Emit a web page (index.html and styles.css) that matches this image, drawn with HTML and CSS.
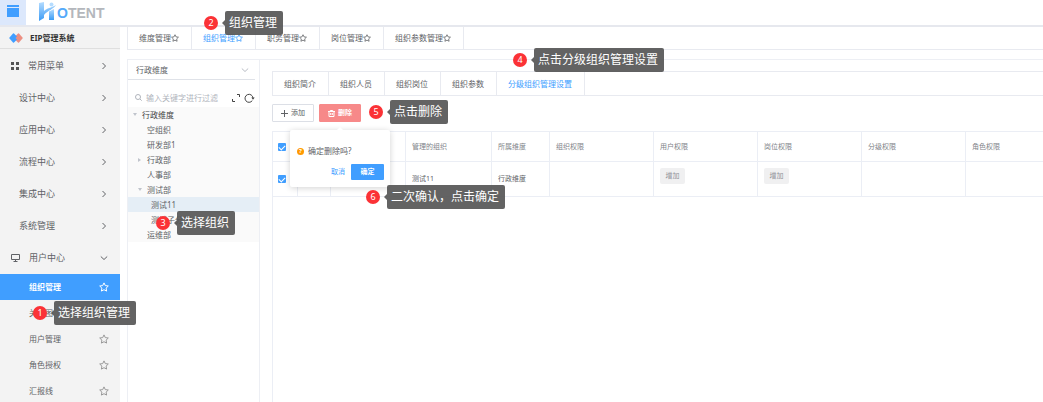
FILE: index.html
```html
<!DOCTYPE html>
<html lang="zh-CN">
<head>
    <meta charset="UTF-8">
    <meta name="viewport" content="width=device-width, initial-scale=1.0">
    <title>EIP管理系统</title>
    <link rel="stylesheet" href="styles.css">
</head>
<body>
    <!-- Shared icons -->
    <svg class="sprite" aria-hidden="true">
        <symbol id="right" viewBox="0 0 8 8"><path d="M2.500 1 5.500 4 2.500 7"/></symbol>
        <symbol id="down" viewBox="0 0 8 8"><path d="M.8 2.500 4 5.500 7.200 2.500"/></symbol>
        <symbol id="star" viewBox="0 0 10 10"><path d="M5 .9 6.3 3.6 9.3 4 7.1 6.1 7.6 9.1 5 7.7 2.4 9.1 2.9 6.1 .7 4 3.7 3.6z"/></symbol>
    </svg>

    <header class="topbar">
        <button class="menu-btn" aria-label="菜单">
            <svg width="12" height="12" viewBox="0 0 12 12"><path d="M0 0h12v2H0zM0 3h12v9H0z" fill="#409eff"/></svg>
        </button>
        <a class="logo" href="#">
            <svg width="19" height="19" viewBox="0 0 19 19">
                <defs>
                    <linearGradient id="blue" x1="0" y1="0" x2="0" y2="1">
                        <stop offset="0" stop-color="#b5dcff"/>
                        <stop offset="1" stop-color="#3a9bf5"/>
                    </linearGradient>
                </defs>
                <path d="M1 1 6 0v9C9 6 13 6 18 3c-2 4-8 5-12 10v3L1 19z" fill="url(#blue)"/>
                <path d="M11 9.500 16 7v11h-5z" fill="url(#blue)"/>
                <circle cx="13.500" cy="2.500" r="2" fill="#b5dcff"/>
            </svg>
            <span><b>O</b>TENT</span>
        </a>
    </header>

    <div class="layout">
        <!-- Sidebar -->
        <aside class="sidebar">
            <div class="system">
                <svg width="14" height="10" viewBox="0 0 14 10">
                    <path d="M9 .5Q9.500 0 10 .5L13.500 4.500Q14 5 13.500 5.500L10 9.500Q9.500 10 9 9.500L5.500 6V4z" fill="#ec8f82"/>
                    <path d="M4 .5Q4.500 0 5 .5L8 3.500 6.500 5 8 6.500 5 9.500Q4.500 10 4 9.500L.5 5.500Q0 5 .5 4.500z" fill="#409eff"/>
                </svg>
                EIP管理系统
            </div>
            <nav class="menu">
                <a class="has-icon" href="#">
                    <svg width="8" height="8" viewBox="0 0 8 8"><path d="M0 0h3v3H0zM5 0h3v3H5zM0 5h3v3H0zM5 5h3v3H5z" fill="#555"/></svg>
                    <span>常用菜单</span><svg class="line arrow"><use href="#right"/></svg>
                </a>
                <a href="#"><span>设计中心</span><svg class="line arrow"><use href="#right"/></svg></a>
                <a href="#"><span>应用中心</span><svg class="line arrow"><use href="#right"/></svg></a>
                <a href="#"><span>流程中心</span><svg class="line arrow"><use href="#right"/></svg></a>
                <a href="#"><span>集成中心</span><svg class="line arrow"><use href="#right"/></svg></a>
                <a href="#"><span>系统管理</span><svg class="line arrow"><use href="#right"/></svg></a>
                <a class="has-icon" href="#">
                    <svg class="line" width="9" height="8" viewBox="0 0 9 8"><path d="M.5 .5h8v5h-8zM2.500 7.500h4M4.500 5.500v2"/></svg>
                    <span>用户中心</span><svg class="line arrow"><use href="#down"/></svg>
                </a>
            </nav>
            <nav class="submenu">
                <a class="active" href="#">组织管理<svg class="line star"><use href="#star"/></svg></a>
                <a href="#">关系图<svg class="line star"><use href="#star"/></svg></a>
                <a href="#">用户管理<svg class="line star"><use href="#star"/></svg></a>
                <a href="#">角色授权<svg class="line star"><use href="#star"/></svg></a>
                <a href="#">汇报线<svg class="line star"><use href="#star"/></svg></a>
            </nav>
        </aside>

        <main class="main">
            <nav class="tabs">
                <a href="#">维度管理<svg class="line"><use href="#star"/></svg></a>
                <a class="active" href="#">组织管理<svg class="line"><use href="#star"/></svg></a>
                <a href="#">职务管理<svg class="line"><use href="#star"/></svg></a>
                <a href="#">岗位管理<svg class="line"><use href="#star"/></svg></a>
                <a href="#">组织参数管理<svg class="line"><use href="#star"/></svg></a>
            </nav>

            <div class="panels">
                <!-- Organisation tree -->
                <section class="tree-panel">
                    <div class="dimension">
                        <select aria-label="维度"><option>行政维度</option></select>
                        <svg class="line"><use href="#down"/></svg>
                    </div>
                    <div class="search">
                        <svg class="line" width="7" height="7" viewBox="0 0 7 7"><circle cx="3" cy="3" r="2.500"/><path d="m5 5 1.700 1.700"/></svg>
                        <input type="text" placeholder="输入关键字进行过滤" aria-label="过滤">
                        <button aria-label="展开"><svg class="line" width="8" height="8" viewBox="0 0 8 8"><path d="M5 .5h2.500V3M.5 5v2.500H3"/></svg></button>
                        <button aria-label="刷新"><svg class="line" width="11" height="10" viewBox="0 0 11 10"><path d="M8.300 7.600A4 4 0 1 1 9 5"/><path d="M7.300 4.500h3.400L9 6.700z" fill="currentColor" stroke="none"/></svg></button>
                    </div>
                    <ul class="tree">
                        <li class="root open">行政维度</li>
                        <li>空组织</li>
                        <li>研发部1</li>
                        <li class="closed">行政部</li>
                        <li>人事部</li>
                        <li class="open">测试部</li>
                        <li class="child selected">测试11</li>
                        <li class="child">测试子分部</li>
                        <li>运维部</li>
                    </ul>
                </section>

                <!-- Organisation detail -->
                <section class="detail">
                    <nav class="detail-tabs">
                        <a href="#">组织简介</a>
                        <a href="#">组织人员</a>
                        <a href="#">组织岗位</a>
                        <a href="#">组织参数</a>
                        <a class="active" href="#">分级组织管理设置</a>
                    </nav>
                    <div class="toolbar">
                        <button class="btn"><svg class="line" width="7" height="7" viewBox="0 0 7 7"><path d="M3.500 0v7M0 3.500h7"/></svg>添加</button>
                        <div class="delete">
                            <button class="btn danger"><svg class="line" width="7" height="7" viewBox="0 0 7 7"><path d="M0 1.500h7M2.300 1.500v-1h2.400v1M1 1.500v5h5v-5M2.700 3v2M4.300 3v2"/></svg>删除</button>
                            <div class="popover">
                                <p><i>?</i>确定删除吗?</p>
                                <div class="popover-actions">
                                    <button class="cancel">取消</button>
                                    <button class="confirm">确定</button>
                                </div>
                            </div>
                        </div>
                    </div>
                    <div class="table-wrap">
                        <table>
                            <colgroup>
                                <col class="c-check"><col class="c-index"><col class="c-action"><col class="c-org"><col class="c-dim">
                                <col class="c-auth" span="5">
                            </colgroup>
                            <thead>
                                <tr>
                                    <th><input type="checkbox" aria-label="全选" checked></th>
                                    <th></th>
                                    <th></th>
                                    <th>管理的组织</th>
                                    <th>所属维度</th>
                                    <th>组织权限</th>
                                    <th>用户权限</th>
                                    <th>岗位权限</th>
                                    <th>分级权限</th>
                                    <th>角色权限</th>
                                </tr>
                            </thead>
                            <tbody>
                                <tr>
                                    <td><input type="checkbox" aria-label="选择" checked></td>
                                    <td></td>
                                    <td></td>
                                    <td>测试11</td>
                                    <td>行政维度</td>
                                    <td></td>
                                    <td class="top"><button class="tag">增加</button></td>
                                    <td class="top"><button class="tag">增加</button></td>
                                    <td></td>
                                    <td></td>
                                </tr>
                            </tbody>
                        </table>
                    </div>
                </section>
            </div>
        </main>
    </div>

    <!-- Guide steps -->
    <div class="step step-1"><b>1</b><span>选择组织管理</span></div>
    <div class="step step-2"><b>2</b><span>组织管理</span></div>
    <div class="step step-3"><b>3</b><span>选择组织</span></div>
    <div class="step step-4"><b>4</b><span>点击分级组织管理设置</span></div>
    <div class="step step-5"><b>5</b><span>点击删除</span></div>
    <div class="step step-6"><b>6</b><span>二次确认，点击确定</span></div>
</body>
</html>
```
FILE: styles.css
```css
* {
    margin: 0;
    padding: 0;
    box-sizing: border-box;
}

body {
    display: flex;
    flex-direction: column;
    height: 100vh;
    overflow: hidden;
    background: #fff;
    color: #606266;
    font-family: "Noto Sans", "Noto Sans CJK SC", sans-serif;
    font-size: 8px;
    line-height: 12px;
}

a {
    color: inherit;
    text-decoration: none;
}

button,
input,
select {
    border: none;
    background: none;
    color: inherit;
    font: inherit;
}

svg {
    flex: none;
}

.sprite {
    position: absolute;
    width: 0;
    height: 0;
}

.line {
    fill: none;
    stroke: currentColor;
}

/* Top bar */
.topbar {
    display: flex;
    flex: none;
    height: 27px;
    border-bottom: 2px solid #e6e8ee;
}

.menu-btn {
    display: flex;
    align-items: center;
    justify-content: center;
    width: 26px;
    padding-bottom: 4px;
    background: #dce8fc;
}

.logo {
    display: flex;
    align-items: center;
    padding-left: 12px;
    color: #b4b7bc;
    font-family: "Liberation Sans", Arial, sans-serif;
    font-size: 14px;
    font-weight: bold;
}

.logo svg {
    margin-bottom: 3px;
}

.logo span {
    padding-top: 1px;
}

.logo b {
    color: #55aafa;
}

.layout {
    display: flex;
    flex: 1;
    min-height: 0;
}

/* Sidebar */
.sidebar {
    flex: none;
    width: 120px;
    overflow: hidden;
    background: #f3f3f3;
}

.system {
    display: flex;
    align-items: center;
    gap: 7px;
    height: 22px;
    padding-left: 9px;
    border-bottom: 1px solid #dfdfdf;
    color: #333;
    font-weight: bold;
}

.menu {
    padding-top: 1px;
}

.menu a {
    display: flex;
    align-items: center;
    height: 32px;
    padding: 0 12px 0 19px;
    font-size: 9px;
}

.menu .has-icon {
    gap: 9px;
    padding-left: 11px;
}

.menu span {
    flex: 1;
}

.arrow {
    width: 8px;
    height: 8px;
}

.submenu a {
    display: flex;
    align-items: center;
    justify-content: space-between;
    height: 26px;
    padding: 0 11px 0 29px;
}

.submenu .active {
    background: #409eff;
    color: #fff;
    font-weight: bold;
}

.star {
    width: 10px;
    height: 10px;
    color: #999;
}

.active .star {
    color: #fff;
}

/* Main area */
.main {
    display: flex;
    flex: 1;
    flex-direction: column;
    min-width: 0;
    padding-left: 7px;
}

.tabs {
    display: flex;
    flex: none;
    height: 23px;
    border-bottom: 1px solid #e8eaf0;
    border-left: 1px solid #e8eaf0;
}

.tabs a {
    display: flex;
    align-items: center;
    padding: 0 12px 0 11px;
    border-right: 1px solid #e8eaf0;
}

.tabs svg {
    width: 8px;
    height: 8px;
}

.tabs .active,
.detail-tabs .active {
    color: #409eff;
}

.panels {
    display: flex;
    flex: 1;
    min-height: 0;
    margin-top: 9px;
}

/* Tree panel */
.tree-panel {
    flex: none;
    width: 133px;
    border: 1px solid #edeff4;
    border-bottom: none;
}

.dimension {
    display: flex;
    align-items: center;
    height: 20px;
    margin-right: 4px;
    padding: 0 6px 0 8px;
    border-bottom: 1px solid #dfe2e8;
}

.dimension select {
    flex: 1;
    appearance: none;
}

.dimension svg {
    width: 8px;
    height: 8px;
    color: #b8bcc4;
}

.search {
    display: flex;
    align-items: center;
    gap: 4px;
    height: 27px;
    padding: 8px 4px 0 7px;
    color: #b0b4bc;
}

.search input {
    flex: 1;
    min-width: 0;
}

.search input::placeholder {
    color: #b0b4bc;
}

.search button {
    display: flex;
    color: #444;
}

.tree {
    list-style: none;
    background: #fafafa;
}

.tree li {
    display: flex;
    align-items: center;
    gap: 5px;
    height: 15px;
    padding-left: 19px;
}

.tree .child {
    padding-left: 23px;
}

.tree .selected {
    background: #e5eef6;
}

.tree .open,
.tree .closed {
    padding-left: 10px;
}

.tree .root {
    padding-left: 5px;
    color: #444;
}

.open::before,
.closed::before {
    content: "";
    border: 2px solid transparent;
    border-top: 3px solid #c0c4cc;
    border-bottom: none;
}

.closed::before {
    margin-right: 1px;
    border: 2px solid transparent;
    border-left: 3px solid #c0c4cc;
    border-right: none;
}

/* Detail panel */
.detail {
    display: flex;
    flex: 1;
    flex-direction: column;
    min-width: 0;
    padding: 11px 0 0 12px;
    border-top: 1px solid #edeff4;
}

.detail-tabs {
    display: flex;
    flex: none;
    height: 25px;
    border: 1px solid #e8eaf0;
    border-right: none;
}

.detail-tabs a {
    display: flex;
    align-items: center;
    padding: 0 12px 0 11px;
    border-right: 1px solid #e8eaf0;
}

.toolbar {
    display: flex;
    flex: none;
    gap: 5px;
    padding: 8px 0 9px;
}

.btn {
    display: flex;
    align-items: center;
    justify-content: center;
    gap: 3px;
    width: 42px;
    height: 18px;
    border: 1px solid #dcdfe6;
    border-radius: 1px;
    font-size: 7px;
}

.danger {
    border-color: #f78989;
    background: #f78989;
    color: #fff;
    font-weight: bold;
}

.delete {
    position: relative;
}

.popover {
    position: absolute;
    top: 26px;
    left: 50%;
    z-index: 1;
    width: 100px;
    margin-left: -50px;
    padding: 15px 6px 7px 7px;
    border-radius: 2px;
    background: #fff;
    box-shadow: 0 1px 6px rgba(0, 0, 0, 0.18);
}

.popover::before {
    content: "";
    position: absolute;
    top: -3px;
    left: 47px;
    border: 3px solid transparent;
    border-top: none;
    border-bottom-color: #fff;
}

.popover p {
    display: flex;
    align-items: center;
    gap: 4px;
}

.popover i {
    width: 7px;
    height: 7px;
    border-radius: 50%;
    background: #ff9900;
    color: #fff;
    font-size: 6px;
    font-style: normal;
    font-weight: bold;
    line-height: 7px;
    text-align: center;
}

.popover-actions {
    display: flex;
    justify-content: flex-end;
    gap: 6px;
    margin-top: 7px;
    font-size: 7px;
}

.cancel {
    color: #409eff;
}

.confirm {
    width: 33px;
    height: 16px;
    border-radius: 1px;
    background: #409eff;
    color: #fff;
    font-weight: bold;
}

/* Table */
.table-wrap {
    flex: 1;
    overflow: hidden;
    border-top: 1px solid #ebeef5;
    border-left: 1px solid #ebeef5;
}

table {
    width: 797px;
    border-collapse: separate;
    border-spacing: 0;
    table-layout: fixed;
    font-size: 7px;
}

.c-check {
    width: 25px;
}

.c-index {
    width: 33px;
}

.c-action {
    width: 75px;
}

.c-org {
    width: 86px;
}

.c-dim {
    width: 58px;
}

.c-auth {
    width: 104px;
}

th,
td {
    height: 35px;
    padding: 0 6px;
    border-right: 1px solid #ebeef5;
    border-bottom: 1px solid #ebeef5;
    text-align: left;
    vertical-align: middle;
}

th {
    height: 30px;
    color: #808389;
    font-weight: normal;
}

th:first-child,
td:first-child {
    padding: 0 5px;
}

td.top {
    padding-top: 6px;
    vertical-align: top;
}

input[type="checkbox"] {
    display: block;
    width: 8px;
    height: 8px;
    appearance: none;
    border-radius: 1px;
    background: #409eff;
}

input[type="checkbox"]::after {
    content: "";
    display: block;
    width: 5px;
    height: 3px;
    margin: 0 auto;
    border-bottom: 1px solid #fff;
    border-left: 1px solid #fff;
    transform: translateY(2px) rotate(-45deg);
}

.tag {
    display: block;
    width: 25px;
    height: 16px;
    border-radius: 2px;
    background: #f0f0f1;
    color: #909399;
}

/* Guide steps */
.step {
    position: absolute;
    z-index: 2;
    display: flex;
    align-items: center;
    gap: 7px;
    color: #fff;
    font-size: 12px;
    line-height: 24px;
}

.step b {
    width: 14px;
    height: 14px;
    border-radius: 50%;
    background: #fb3236;
    font-size: 9px;
    font-weight: normal;
    line-height: 14px;
    text-align: center;
}

.step span {
    position: relative;
    padding: 0 6px 0 4px;
    border-radius: 2px;
    background: rgba(82, 82, 82, 0.9);
}

.step span::before {
    content: "";
    position: absolute;
    top: 9px;
    left: -3px;
    border: 3px solid transparent;
    border-right-color: rgba(82, 82, 82, 0.9);
    border-left: none;
}

.step-1 {
    top: 301px;
    left: 33px;
}

.step-2 {
    top: 11px;
    left: 204px;
}

.step-3 {
    top: 211px;
    left: 156px;
}

.step-4 {
    top: 48px;
    left: 513px;
}

.step-5 {
    top: 100px;
    left: 369px;
}

.step-6 {
    top: 185px;
    left: 366px;
}
```
